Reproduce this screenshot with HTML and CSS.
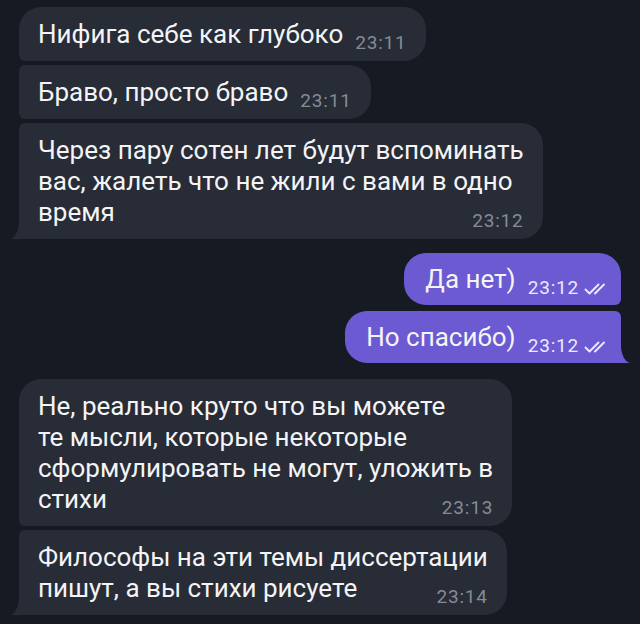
FILE: index.html
```html
<!DOCTYPE html>
<html lang="ru">
<head>
  <meta charset="UTF-8">
  <meta name="viewport" content="width=device-width, initial-scale=1.0">
  <title>Чат</title>
  <link rel="stylesheet" href="styles.css">
</head>
<body>

<div class="chat">
  <div class="msg in first">Нифига себе как глубоко<span class="time">23:11</span></div>
  <div class="msg in middle">Браво, просто браво<span class="time">23:11</span></div>
  <div class="msg in last">Через пару сотен лет будут вспоминать<br>вас, жалеть что не жили с вами в одно<br>время<span class="time">23:12</span></div>

  <div class="msg out first">Да нет)<span class="time">23:12<svg class="checks" width="26" height="12" viewBox="0 0 26 12"><path d="M1.5 6.5 L5.5 10.5 L14.5 1.5 M11 10.5 L20 1.5"/></svg></span></div>
  <div class="msg out last">Но спасибо)<span class="time">23:12<svg class="checks" width="26" height="12" viewBox="0 0 26 12"><path d="M1.5 6.5 L5.5 10.5 L14.5 1.5 M11 10.5 L20 1.5"/></svg></span></div>

  <div class="msg in first">Не, реально круто что вы можете<br>те мысли, которые некоторые<br>сформулировать не могут, уложить в<br>стихи<span class="time">23:13</span></div>
  <div class="msg in last">Философы на эти темы диссертации<br>пишут, а вы стихи рисуете<span class="time">23:14</span></div>
</div>

</body>
</html>
```

FILE: styles.css
```css
body {
  margin: 0;
  background: #151a23;
  font-family: Roboto, "Noto Sans", sans-serif;
  color: #f4f4f6;
}
.chat {
  display: flex;
  flex-direction: column;
  padding: 7px 19px 0 19px;
}
.msg {
  position: relative;
  font-size: 26px;
  line-height: 31px;
  white-space: nowrap;
  padding: 12px 19px 11px 19px;
  margin-bottom: 4px;
  border-radius: 22px;
}
.msg.in {
  align-self: flex-start;
  background: #272c37;
}
.msg.out {
  align-self: flex-end;
  background: #6b5ad2;
  padding: 11px 11px 10px 21px;
}
.time {
  float: right;
  font-size: 19px;
  letter-spacing: 0.8px;
  line-height: 14px;
  margin: 17px 0 0 12px;
  color: #858b96;
}
.msg.out .time {
  color: #ece9ff;
  margin: 17px 0 0 12px;
}
.checks {
  margin-left: 5px;
  vertical-align: -1px;
}
.checks path {
  fill: none;
  stroke: #ece9ff;
  stroke-width: 1.9;
  stroke-linecap: round;
  stroke-linejoin: round;
}

/* grouped corners */
.msg.in.first { border-bottom-left-radius: 6px; }
.msg.in.middle { border-top-left-radius: 6px; border-bottom-left-radius: 6px; }
.msg.in.last { border-top-left-radius: 6px; border-bottom-left-radius: 0; }
.msg.out.first { border-bottom-right-radius: 6px; }
.msg.out.last { border-top-right-radius: 6px; border-bottom-right-radius: 0; }

.msg.in.last { margin-bottom: 14px; }
.msg.out.first { margin-bottom: 6px; }
.msg.out.last { margin-bottom: 16px; }

/* bubble tails */
.msg.last::before,
.msg.last::after {
  content: "";
  position: absolute;
  bottom: 0;
  width: 10px;
  height: 18px;
}
.msg.in.last::before { left: -10px; background: #272c37; }
.msg.in.last::after {
  left: -10px;
  background: #151a23;
  border-bottom-right-radius: 10px 18px;
}
.msg.out.last::before { right: -10px; background: #6b5ad2; }
.msg.out.last::after {
  right: -10px;
  background: #151a23;
  border-bottom-left-radius: 10px 18px;
}
```
